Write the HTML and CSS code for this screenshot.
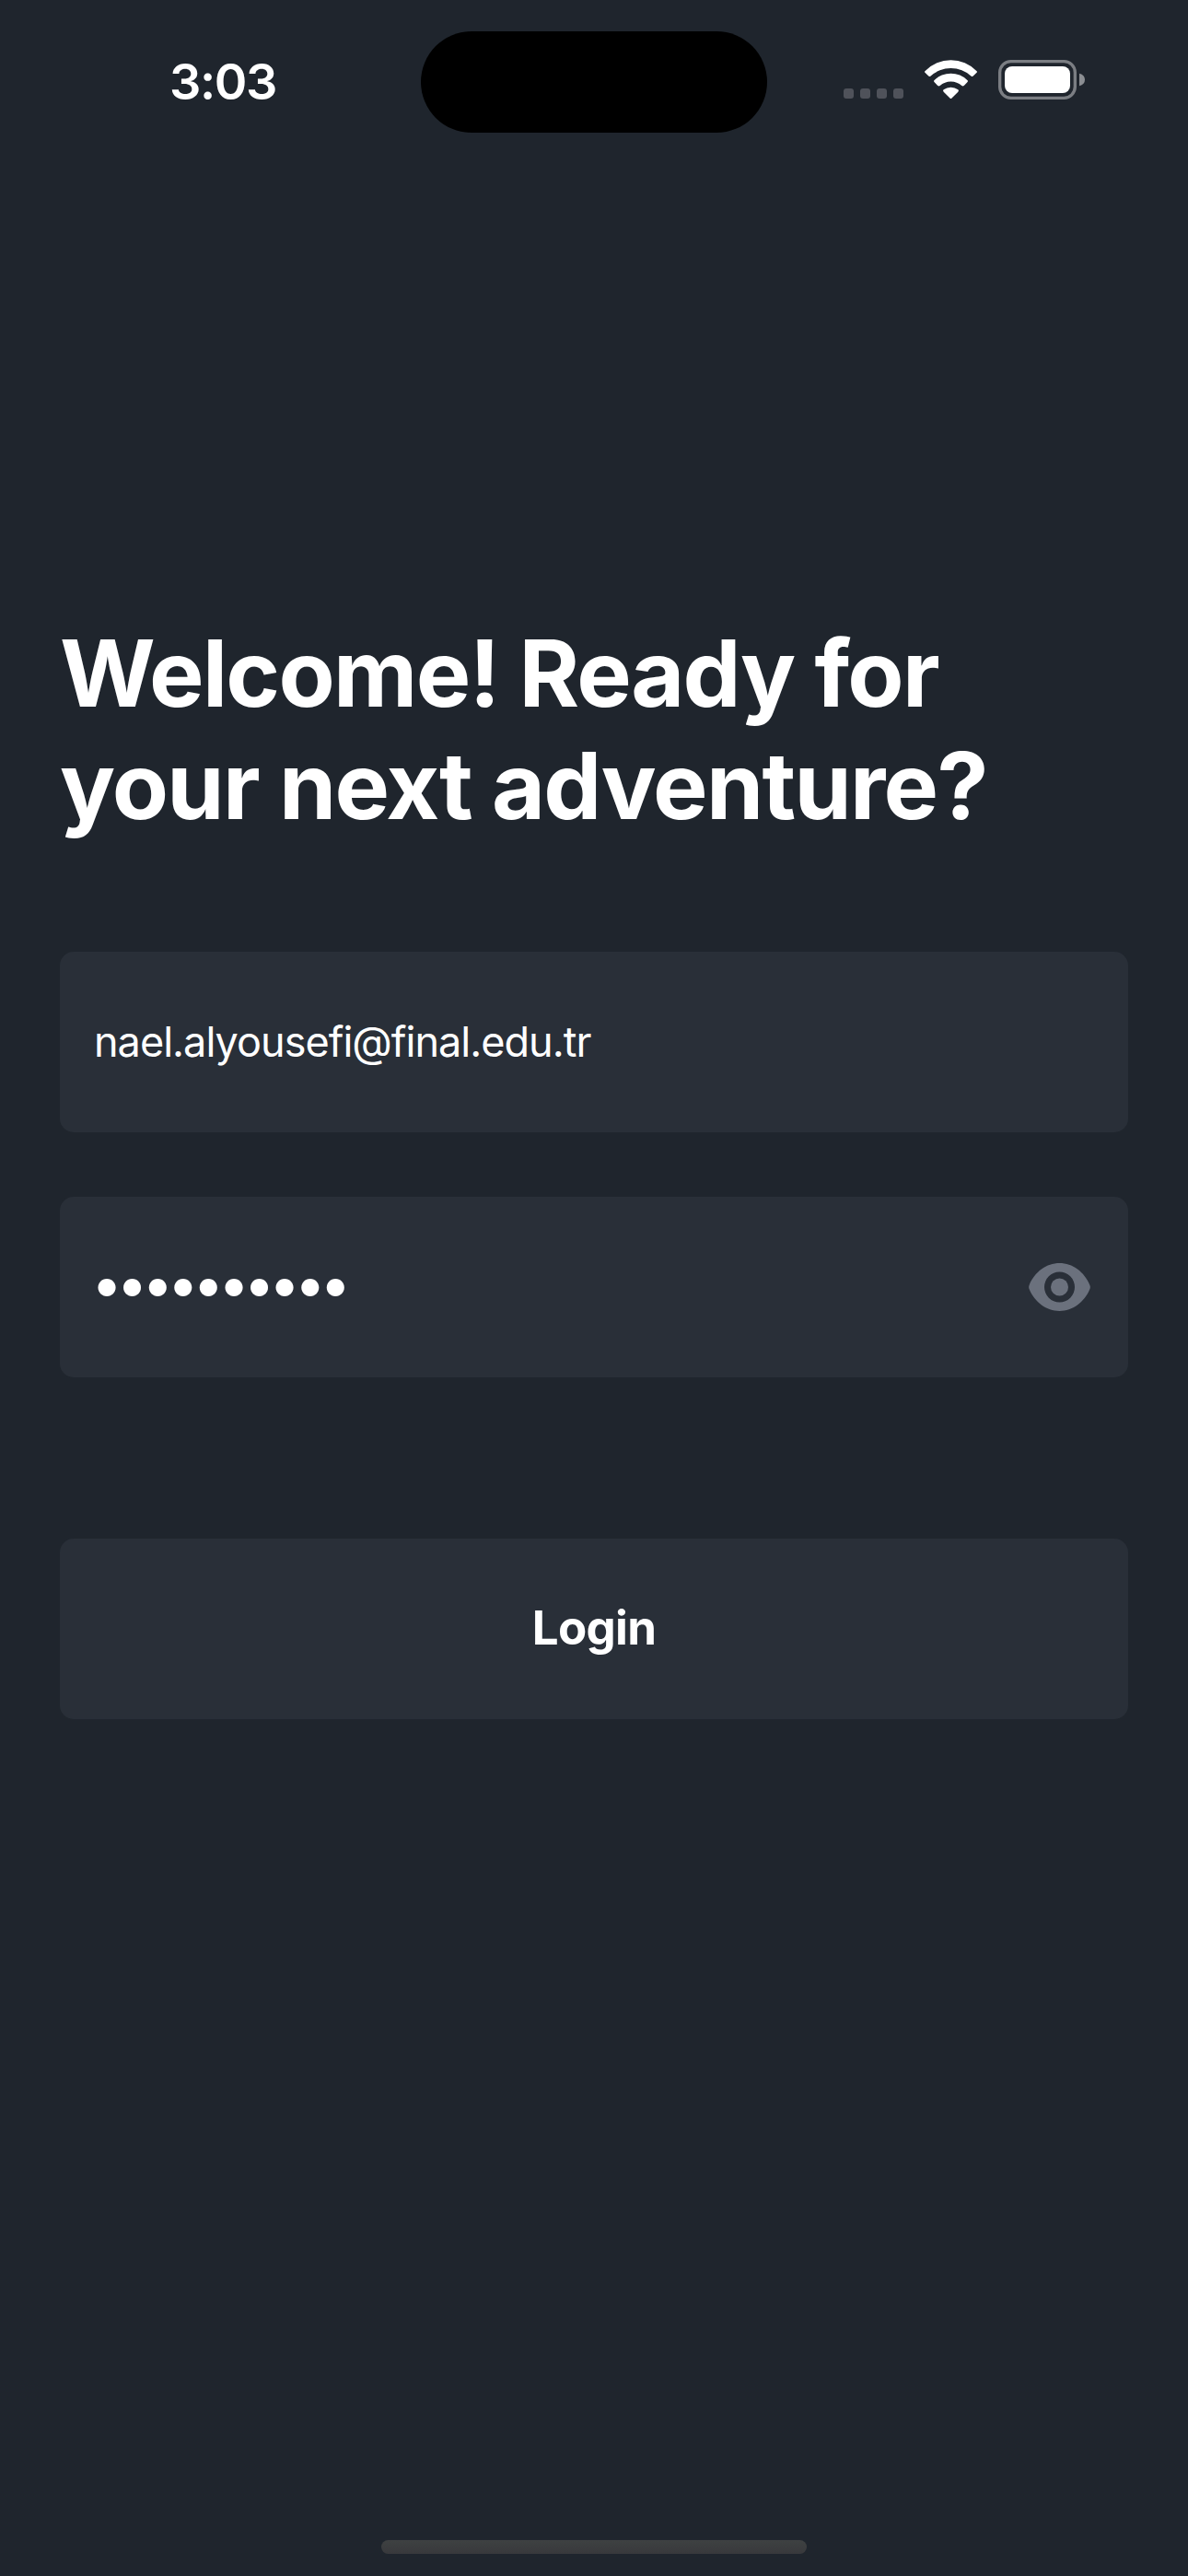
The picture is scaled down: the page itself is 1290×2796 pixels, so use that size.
FILE: index.html
```html
<!DOCTYPE html>
<html lang="en">
<head>
<meta charset="utf-8">
<title>Login</title>
<link rel="stylesheet" href="styles.css">
</head>
<body>
<div class="screen">
  <header class="status-bar">
    <div class="time">3:03</div>
    <div class="island"></div>
    <div class="indicators">
      <div class="signal"><i></i><i></i><i></i><i></i></div>
      <svg class="wifi" viewBox="669 135 177 129" aria-hidden="true">
        <path d="M674 171A116 116 0 0 1 841 171Q845 174 841 177L831 187Q828 191 824 188A99 99 0 0 0 691 188Q687 191 684 187L674 177Q670 174 674 171Z"/>
        <path d="M704 201A76 76 0 0 1 811 201Q815 204 811 208L801 218Q797 222 793 219A53 53 0 0 0 722 219Q718 222 714 218L704 208Q700 204 704 201Z"/>
        <path d="M734 232A40 40 0 0 1 781 232Q785 235 781 239L760.500 259.500Q757.500 262.500 754.500 259.500L734 239Q730 235 734 232Z"/>
      </svg>
      <svg class="battery" viewBox="912 135 285 129" aria-hidden="true">
        <rect class="shell" x="917" y="140" width="245" height="119" rx="36"/>
        <rect class="charge" x="933" y="156" width="213" height="87" rx="24"/>
        <path class="cap" d="M1176 179Q1194 184 1194 199.500Q1194 215 1176 220Z"/>
      </svg>
    </div>
  </header>
  <main class="login">
    <h1 class="title">Welcome! Ready for<br>your next adventure?</h1>
    <form class="form">
      <div class="box field"><span class="email">nael.alyousefi@final.edu.tr</span></div>
      <div class="box field">
        <span class="password">••••••••••</span>
        <svg class="eye" viewBox="0 0 201 156" aria-hidden="true">
          <path fill-rule="evenodd" d="M2 71C20 28 58 0 100.500 0S181 28 199 71Q202 78 199 85C181 128 143 156 100.500 156S20 128 2 85Q-1 78 2 71ZM100.500 28.500a49.500 49.500 0 1 0 0 99a49.500 49.500 0 1 0 0-99Z"/>
          <circle cx="100.500" cy="78" r="28.500"/>
        </svg>
      </div>
      <button class="box submit" type="button">Login</button>
    </form>
  </main>
  <div class="home-indicator"></div>
</div>
</body>
</html>
```
FILE: styles.css
```css
* { box-sizing: border-box; }

body {
  margin: 0;
  background: #1f252d;
  color: #fff;
  font-family: Inter, "Liberation Sans", sans-serif;
}

.screen {
  display: flex;
  flex-direction: column;
  width: 1290px;
  height: 2796px;
  padding-bottom: 24px;
}

.status-bar {
  display: grid;
  grid-template-columns: 457px 376px 1fr;
  height: 144px;
  padding-top: 34px;
}

.time {
  padding: 22px 0 0 184px;
  font-size: 54px;
  font-weight: 600;
  line-height: 66px;
  letter-spacing: -1.4px;
}

.island {
  height: 110px;
  border-radius: 55px;
  background: #000;
}

.indicators {
  display: flex;
  align-items: flex-start;
  padding: 31px 0 0 83px;
}

.signal {
  display: flex;
  gap: 7px;
  margin: 31px 22px 0 0;
}

.signal i {
  width: 11px;
  height: 11px;
  border-radius: 3px;
  background: #4f525a;
}

.wifi {
  width: 59px;
  height: 43px;
  margin-right: 22px;
  fill: #fff;
}

.battery {
  width: 95px;
  height: 43px;
}

.shell {
  fill: none;
  stroke: #7b7e83;
  stroke-width: 10;
}

.charge { fill: #fff; }
.cap { fill: #8b8e92; }

.login {
  flex: 1;
  padding: 526px 65px 0;
}

.title {
  margin: 0 0 119px;
  font-size: 100px;
  font-weight: 700;
  line-height: 122px;
  letter-spacing: -1.7px;
  white-space: nowrap;
}

.form {
  display: flex;
  flex-direction: column;
}

.box {
  display: flex;
  align-items: center;
  height: 196px;
  border-radius: 15px;
  background: #292f38;
}

.field {
  justify-content: space-between;
  margin-bottom: 70px;
  padding: 0 41px 0 36px;
}

.email {
  padding: 0 0 1px 1px;
  font-size: 45px;
  letter-spacing: -0.97px;
}

.password {
  padding-bottom: 8px;
  margin-left: -2px;
  font-size: 60.6px;
  letter-spacing: -6.5px;
}

.eye {
  width: 67px;
  height: 52px;
  fill: #6b717d;
}

.submit {
  justify-content: center;
  margin-top: 105px;
  padding: 0 0 3px;
  border: 0;
  color: #fff;
  font-family: inherit;
  font-size: 51px;
  font-weight: 700;
  letter-spacing: -0.7px;
}

.home-indicator {
  width: 462px;
  height: 15px;
  margin: 0 auto;
  border-radius: 8px;
  background: linear-gradient(#3e4142, #38393c);
}
```
